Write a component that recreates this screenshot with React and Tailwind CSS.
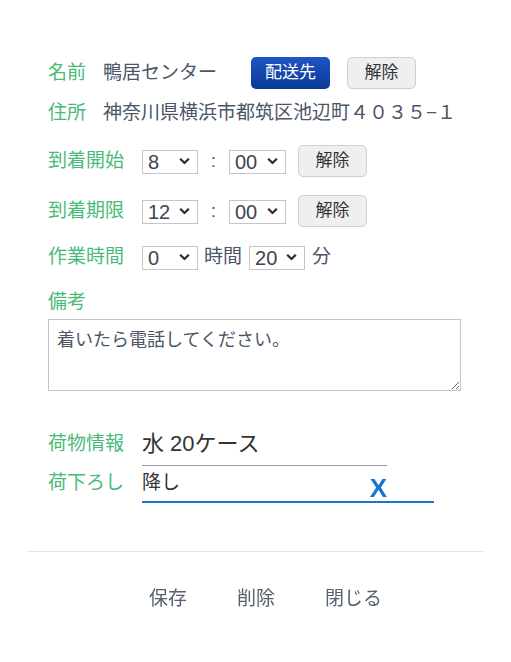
import { useState } from "react";

const font = { fontFamily: '"Liberation Sans", "Noto Sans CJK JP", sans-serif' };

function Chevron() {
  return (
    <svg width="11" height="7" viewBox="0 0 11 7" className="pointer-events-none absolute right-[8px] top-1/2 -translate-y-1/2">
      <polyline points="1.2,1.3 5.5,5.5 9.8,1.3" fill="none" stroke="#2d2d2d" strokeWidth="2.3" />
    </svg>
  );
}

function TimeSelect({ value, options, width = "w-[56px]" }) {
  return (
    <div className={`relative ${width} h-[24px] shrink-0`}>
      <select
        defaultValue={value}
        className="appearance-none w-full h-full border border-[#c6c6c6] bg-white pl-[5px] text-[20px] leading-[22px] text-[#3d4451] outline-none"
      >
        {options.map((o) => (
          <option key={o} value={o}>
            {o}
          </option>
        ))}
      </select>
      <Chevron />
    </div>
  );
}

function GrayButton({ children, className = "" }) {
  return (
    <button className={`w-[69px] h-[32px] rounded-[5px] border border-[#cfcfcf] bg-[#efefef] text-[17px] text-[#333] ${className}`}>
      {children}
    </button>
  );
}

const hours = Array.from({ length: 24 }, (_, i) => String(i));
const minutes = ["00", "10", "20", "30", "40", "50"];

export default function App() {
  const [memo, setMemo] = useState("着いたら電話してください。");
  const [unload, setUnload] = useState("降し");

  return (
    <div className="min-h-[662px] bg-white px-[27px]" style={font}>
      <div className="px-[21px] pt-[57px]">
        {/* 名前 */}
        <div className="flex items-center h-[32px] text-[19px]">
          <span className="text-[#48bb78] mr-[17px]">名前</span>
          <span className="text-[#4a5568]">鴨居センター</span>
          <button className="ml-[34px] w-[79px] h-[32px] rounded-[5px] bg-gradient-to-b from-[#1f55c4] to-[#0b3a96] text-white text-[17px]">
            配送先
          </button>
          <GrayButton className="ml-[17px]">解除</GrayButton>
        </div>

        {/* 住所 */}
        <div className="flex items-center h-[32px] mt-[8px] text-[19px]">
          <span className="text-[#48bb78] mr-[17px]">住所</span>
          <span className="text-[#4a5568] whitespace-nowrap">神奈川県横浜市都筑区池辺町４０３５−１</span>
        </div>

        {/* 到着開始 */}
        <div className="flex items-center h-[32px] mt-[16px] text-[19px]">
          <span className="text-[#48bb78] w-[94px] shrink-0">到着開始</span>
          <TimeSelect value="8" options={hours} />
          <span className="w-[31px] text-center text-[#4a5568]">:</span>
          <TimeSelect value="00" options={minutes} width="w-[57px]" />
          <GrayButton className="ml-[12px]">解除</GrayButton>
        </div>

        {/* 到着期限 */}
        <div className="flex items-center h-[32px] mt-[18px] text-[19px]">
          <span className="text-[#48bb78] w-[94px] shrink-0">到着期限</span>
          <TimeSelect value="12" options={hours} />
          <span className="w-[31px] text-center text-[#4a5568]">:</span>
          <TimeSelect value="00" options={minutes} width="w-[57px]" />
          <GrayButton className="ml-[12px]">解除</GrayButton>
        </div>

        {/* 作業時間 */}
        <div className="flex items-center h-[32px] mt-[14px] text-[19px]">
          <span className="text-[#48bb78] w-[94px] shrink-0">作業時間</span>
          <TimeSelect value="0" options={hours} />
          <span className="ml-[6px] text-[#4a5568]">時間</span>
          <div className="ml-[7px]">
            <TimeSelect value="20" options={minutes} />
          </div>
          <span className="ml-[7px] text-[#4a5568]">分</span>
        </div>

        {/* 備考 */}
        <div className="mt-[15px] h-[28px] flex items-center text-[19px] text-[#48bb78]">備考</div>
        <textarea
          value={memo}
          onChange={(e) => setMemo(e.target.value)}
          className="mt-[3px] block w-[413px] h-[72px] border border-[#c6c6c6] px-[8px] py-[7px] text-[18px] leading-[26px] text-[#4a5568] outline-none"
        />

        {/* 荷物情報 */}
        <div className="flex items-start mt-[38px]">
          <span className="w-[94px] shrink-0 text-[19px] leading-[30px] text-[#48bb78]">荷物情報</span>
          <div className="w-[245px] border-b border-[#9a9a9a] pb-[6px] text-[22px] leading-[30px] text-[#333]">
            水 20ケース
          </div>
        </div>

        {/* 荷下ろし */}
        <div className="flex items-start">
          <span className="w-[94px] shrink-0 pt-[2px] text-[19px] leading-[30px] text-[#48bb78]">荷下ろし</span>
          <div className="flex items-end w-[292px] border-b-2 border-[#1976d2] pt-[2px] pb-[3px]">
            <input
              value={unload}
              onChange={(e) => setUnload(e.target.value)}
              autoFocus
              className="flex-1 min-w-0 text-[19px] leading-[30px] h-[30px] text-[#333] caret-[#1976d2] outline-none"
            />
            <span className="mr-[47px] text-[26px] leading-[20px] font-bold text-[#1976d2]">X</span>
          </div>
        </div>
      </div>

      {/* footer */}
      <div className="mt-[48px] border-t border-[#e4e4e4]">
        <div className="flex justify-center gap-[50px] mt-[33px] pl-[20px] text-[19px] leading-[28px] text-[#56606f]">
          <button>保存</button>
          <button>削除</button>
          <button>閉じる</button>
        </div>
      </div>
    </div>
  );
}
